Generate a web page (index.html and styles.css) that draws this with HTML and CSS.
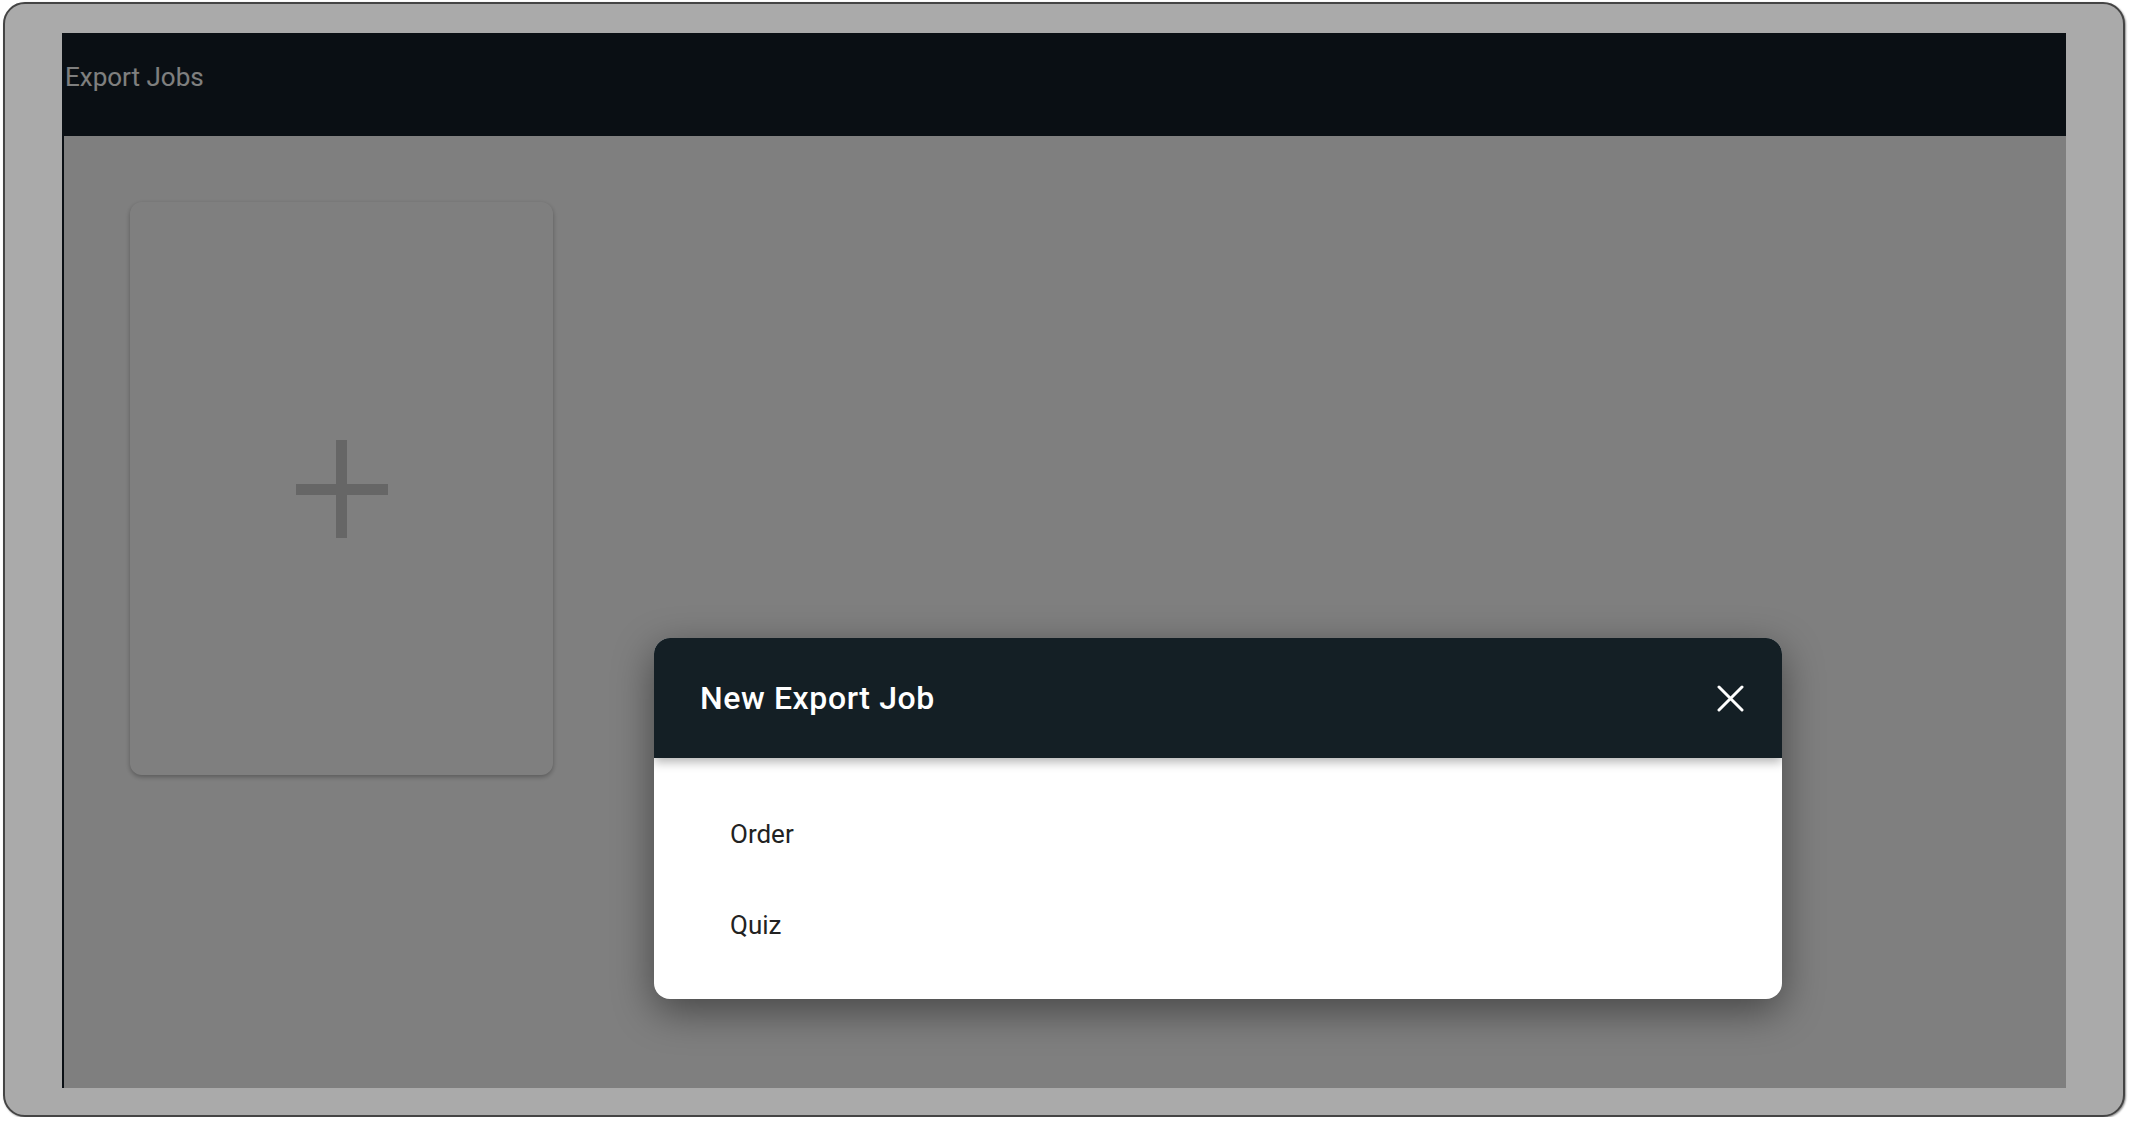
FILE: index.html
```html
<!DOCTYPE html>
<html>
<head>
  <title>Export Jobs</title>
  <link rel="stylesheet" href="styles.css">
</head>
<body>
  <div class="device">
    <div class="screen">
      <header class="top-bar">Export Jobs</header>
      <main class="jobs">
        <div class="job-card add-card">
          <svg width="92" height="98" viewBox="0 0 92 98">
            <rect x="0" y="44" width="92" height="11" fill="#cccccc"/>
            <rect x="40" y="0" width="11" height="98" fill="#cccccc"/>
          </svg>
        </div>
      </main>

      <div class="overlay"></div>

      <div class="dialog">
        <div class="dialog-header">
          <h2>New Export Job</h2>
          <button class="close-btn" type="button">
            <svg width="27" height="27" viewBox="0 0 27 27">
              <path d="M2 2L25 25M25 2L2 25" stroke="#fff" stroke-width="3" stroke-linecap="round"/>
            </svg>
          </button>
        </div>
        <ul class="dialog-list">
          <li>Order</li>
          <li>Quiz</li>
        </ul>
      </div>
    </div>
  </div>
</body>
</html>
```

FILE: styles.css
```css
* {
  box-sizing: border-box;
}

body {
  margin: 0;
  background-color: #fff;
  font-family: Roboto, "Liberation Sans", Arial, sans-serif;
}

.device {
  margin: 2px 0 0 3px;
  width: 2122px;
  height: 1115px;
  padding: 29px 57px 27px 57px;
  background-color: #aaaaaa;
  border: 2px solid #444;
  border-radius: 22px;
  box-shadow: 1px 1px 2px rgba(0, 0, 0, 0.45);
}

.screen {
  position: relative;
  height: 100%;
  display: flex;
  flex-direction: column;
  background-color: #fff;
  overflow: hidden;
}

.top-bar {
  height: 103px;
  padding: 29px 0 0 3px;
  background-color: #141f28;
  color: #fff;
  font-size: 26px;
}

.jobs {
  flex: 1;
  display: flex;
  align-items: flex-start;
  padding: 66px 66px;
  border-left: 2px solid #141f28;
}

.job-card {
  width: 423px;
  height: 573px;
  background-color: #fff;
  border-radius: 12px;
  box-shadow: 0 2px 5px rgba(0, 0, 0, 0.3);
}

.add-card {
  display: flex;
  justify-content: center;
  align-items: center;
}

.overlay {
  position: absolute;
  top: 0;
  left: 0;
  right: 0;
  bottom: 0;
  background-color: rgba(0, 0, 0, 0.5);
}

.dialog {
  position: absolute;
  left: 592px;
  top: 605px;
  width: 1128px;
  height: 361px;
  display: flex;
  flex-direction: column;
  background-color: #fff;
  border-radius: 16px;
  overflow: hidden;
  box-shadow: 0 12px 40px rgba(0, 0, 0, 0.45);
}

.dialog-header {
  position: relative;
  z-index: 1;
  height: 120px;
  flex-shrink: 0;
  display: flex;
  align-items: center;
  justify-content: space-between;
  padding: 0 38px 0 46px;
  background-color: #141f25;
  box-shadow: 0 4px 10px rgba(0, 0, 0, 0.3);
}

.dialog-header h2 {
  margin: 0;
  color: #fff;
  font-size: 32px;
  font-weight: 500;
  letter-spacing: 0.6px;
}

.close-btn {
  display: flex;
  padding: 0;
  background: none;
  border: none;
  cursor: pointer;
}

.dialog-list {
  list-style: none;
  margin: 0;
  padding: 30px 0 29px 0;
}

.dialog-list li {
  height: 91px;
  display: flex;
  align-items: center;
  padding-left: 76px;
  color: #222;
  font-size: 26px;
}
```
